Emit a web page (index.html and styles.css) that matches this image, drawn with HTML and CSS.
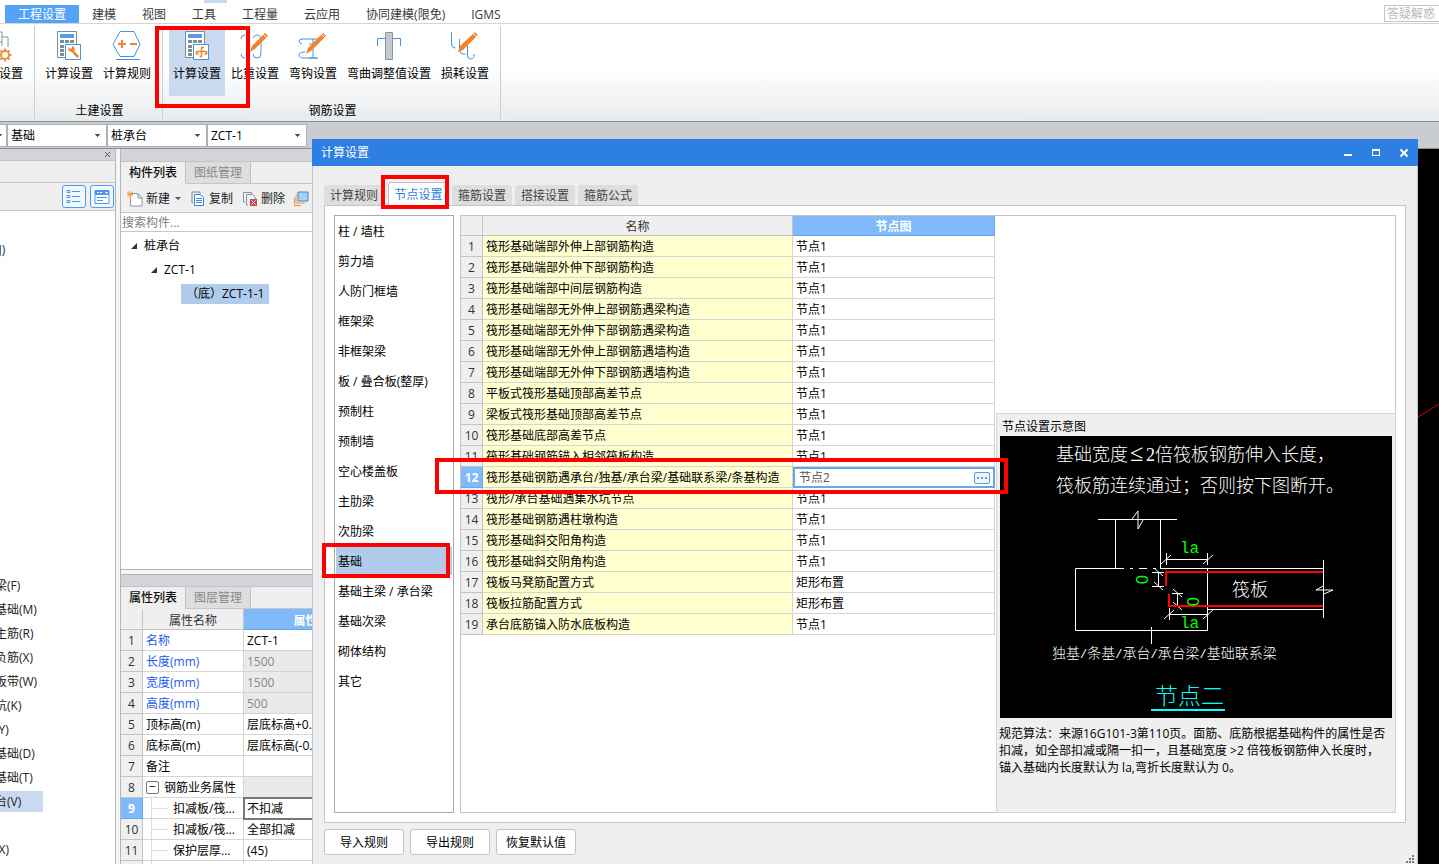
FILE: index.html
```html
<!DOCTYPE html>
<html lang="zh-CN">
<head>
<meta charset="utf-8">
<title>计算设置</title>
<link rel="stylesheet" href="styles.css">
</head>
<body>
<div class="app">
  <nav class="menu">
    <button class="menu-item active">工程设置</button>
    <button class="menu-item">建模</button>
    <button class="menu-item">视图</button>
    <button class="menu-item">工具</button>
    <button class="menu-item">工程量</button>
    <button class="menu-item">云应用</button>
    <button class="menu-item">协同建模(限免)</button>
    <button class="menu-item">IGMS</button>
    <input class="help-search" type="text" placeholder="答疑解惑，" aria-label="答疑解惑">
    <span class="quick-mark"></span>
  </nav>

  <div class="ribbon">
    <section class="group cut">
      <div class="tools">
        <button class="tool">
          <svg width="32" height="32" viewBox="0 0 32 32" fill="none"><path d="M4 2h15v5M19 7h6v10M4 2v27h15M4 12h15M4 20h13M13 2v27M19 6v10" stroke="#8496a4"/><circle cx="22" cy="25" r="4" stroke="#f0913a" stroke-width="2"/><path d="M22 18.500v2M22 29.500v2M15.500 25h2M26.500 25h2M17.500 20.500l1.500 1.500M25 28l1.500 1.500M26.500 20.500l-1.500 1.500M19 28l-1.500 1.500" stroke="#f0913a" stroke-width="2"/></svg>
          <span>楼层设置</span>
        </button>
      </div>
      <div class="group-name">&nbsp;</div>
    </section>
    <section class="group">
      <div class="tools">
        <button class="tool">
          <svg width="32" height="32" viewBox="0 0 32 32" fill="none"><path d="M15 27.500H4.500v-26h19V14" stroke="#7b8d9a"/><path d="M7 4h14v4H7z" fill="#5b9be6"/><path d="M7 10h4v3H7zM12 10h4v3h-4zM17 10h4v3h-4zM7 15h4v3H7zM12 15h2v3h-2zM7 19h4v3H7zM7 23h4v3H7z" fill="#7b8d9a"/><path d="M12.500 14.500h15v15h-15z" fill="#fff" stroke="#4592e0"/><path d="M15 17l2 2 2-1v-2l2 1 1 3-1 1 5 5-1 2-2-1-4-5-3-1-1-2z" fill="#f5822a"/></svg>
          <span>计算设置</span>
        </button>
        <button class="tool">
          <svg width="32" height="32" viewBox="0 0 32 32" fill="none"><path d="M9 1.500h14l6 13-6 12H9l-7-12zM5 29.500h24" stroke="#4592e0"/><path d="M7 14h8M11 10v8M19 14h7" stroke="#f5822a" stroke-width="2"/></svg>
          <span>计算规则</span>
        </button>
      </div>
      <div class="group-name">土建设置</div>
    </section>
    <section class="group">
      <div class="tools">
        <button class="tool selected">
          <svg width="32" height="32" viewBox="0 0 32 32" fill="none"><path d="M4.500 27.500v-26h19v26z" fill="#fff" stroke="#7b8d9a"/><path d="M7 4h14v4H7z" fill="#5b9be6"/><path d="M7 10h4v3H7zM12 10h4v3h-4zM17 10h4v3h-4zM7 15h4v3H7zM12 15h2v3h-2zM7 19h4v3H7zM7 23h4v3H7z" fill="#7b8d9a"/><path d="M12.500 14.500h15v15h-15z" fill="#fff" stroke="#4592e0"/><path d="M23 17.500h-2.500v9h-2M15 21.500h10M15.500 21v3h2M25.500 21v3h-2" stroke="#f5822a" stroke-width="1.500"/></svg>
          <span>计算设置</span>
          <i class="mark mark-tool"></i>
        </button>
        <button class="tool">
          <svg width="32" height="32" viewBox="0 0 32 32" fill="none"><path d="M2 9q0-4 4-4M14 8q1-3 4-3 4 0 4 5v14q0 4-4 4-4 0-4-4M2 24q0 4 4 4M8 6q2 1 2 5v12q0 3-2 5" stroke="#4592e0"/><path d="M11 22l2-6L26 3l3 3-13 13z" fill="#f5822a"/><path d="M24 4l4 4" stroke="#fff"/></svg>
          <span>比重设置</span>
        </button>
        <button class="tool">
          <svg width="32" height="32" viewBox="0 0 32 32" fill="none"><path d="M5 14q-3-1-3-3t4-2h18M8 22q-6 0-6 3t5 3h14M16 9v19M12 14h7M12 28h8" stroke="#4592e0"/><path d="M9 24l2-6L26 3l3 3-15 15z" fill="#f5822a"/><path d="M24 4l4 4" stroke="#fff"/></svg>
          <span>弯钩设置</span>
        </button>
        <button class="tool">
          <svg width="32" height="32" viewBox="0 0 32 32" fill="none"><path d="M4.500 16V8.500h23V16" stroke="#4592e0"/><path d="M12.500 2.500h7v27h-7z" fill="#c2c8cd" stroke="#8a969f"/></svg>
          <span>弯曲调整值设置</span>
        </button>
        <button class="tool">
          <svg width="32" height="32" viewBox="0 0 32 32" fill="none"><path d="M2.500 2v12q0 4 4 4M10.500 9v11q0 4 4 4h2M18.500 16v9q0 4 3 4 4 0 3.500-5" stroke="#4592e0"/><path d="M9 22l2-6L26 2l3 3-15 15z" fill="#f5822a"/><path d="M24 3l4 4" stroke="#fff"/></svg>
          <span>损耗设置</span>
        </button>
      </div>
      <div class="group-name">钢筋设置</div>
    </section>
  </div>

  <div class="selectors">
    <select aria-label="楼层"><option></option></select>
    <select aria-label="构件大类"><option>基础</option></select>
    <select aria-label="构件类型"><option>桩承台</option></select>
    <select aria-label="构件"><option>ZCT-1</option></select>
  </div>

  <main class="workspace">
    <aside class="nav-panel">
      <div class="strip"><button class="close-x" aria-label="关闭"><svg width="7" height="7" viewBox="0 0 7 7"><path d="M1 1l5 5M6 1L1 6" stroke="#555"/></svg></button></div>
      <div class="nav-head"></div>
      <div class="nav-tools">
        <button class="view-btn" aria-label="列表"><svg width="16" height="16" viewBox="0 0 16 16" fill="none"><path d="M1 1.500h3v2H1zM1 6.500h3v2H1zM1 11.500h3v2H1z" stroke="#4a98ec"/><path d="M6 2.500h8M6 7.500h8M6 12.500h8" stroke="#4a98ec"/></svg></button>
        <button class="view-btn" aria-label="面板"><svg width="16" height="16" viewBox="0 0 16 16"><path d="M1 1.500h14v13H1z" fill="#fff" stroke="#4a98ec"/><path d="M1 1h14v5H1z" fill="#4a98ec"/><path d="M3 3h2v1H3zM6 3h2v1H6zM11 3h3l-1 2z" fill="#fff"/><path d="M3 8.500h10M3 11.500h6" stroke="#4a98ec"/></svg></button>
      </div>
      <ul class="nav-list">
        <li></li><li>轴网(J)</li><li></li><li></li><li></li><li></li><li></li><li></li>
        <li></li><li></li><li></li><li></li><li></li><li></li><li></li>
        <li>基础梁(F)</li><li>筏板基础(M)</li><li>筏板主筋(R)</li><li>筏板负筋(X)</li><li>基础板带(W)</li>
        <li>集水坑(K)</li><li>柱墩(Y)</li><li>独立基础(D)</li><li>条形基础(T)</li>
        <li><span class="current">桩承台(V)</span></li><li></li><li>垫层(X)</li>
      </ul>
    </aside>

    <div class="side">
      <section class="components">
        <div class="strip"></div>
        <div class="tabs"><button class="tab on">构件列表</button><button class="tab">图纸管理</button></div>
        <div class="toolbar">
          <button><svg width="16" height="16" viewBox="0 0 16 16" fill="none"><path d="M4 2.500h7l4 4V15H3.500V7M11 3v4h4" stroke="#8496a4" fill="#fff"/><path d="M3 0v7M0 3.500h6M.5 1l5 5M5.500 1l-5 5" stroke="#f0913a"/></svg>新建<i class="caret"></i></button>
          <button><svg width="16" height="16" viewBox="0 0 16 16" fill="none"><path d="M3 12H2V1h8v2" stroke="#6d8699"/><path d="M4.500 3.500h6l3 3v8h-9z" fill="#fff" stroke="#3c86d8"/><path d="M6 7.500h6M6 9.500h6M6 11.500h6" stroke="#3c86d8"/></svg>复制</button>
          <button><svg width="16" height="16" viewBox="0 0 16 16" fill="none"><path d="M3 11H1.500V1.500h8V3M6 14H4.500V3.500h6l3 3V8" stroke="#8496a4"/><path d="M8 8h7v7H8z" fill="#d9424b"/><path d="M9.500 9.500l4 4M13.500 9.500l-4 4" stroke="#fff"/></svg>删除</button>
          <button aria-label="层间复制"><svg width="16" height="16" viewBox="0 0 16 16" fill="none"><path d="M5 1h10v9H5z" fill="#abd0fa" stroke="#3c86d8"/><path d="M4 4H3v8h8v-1M1.500 7v7.500H8" stroke="#f0913a"/></svg></button>
        </div>
        <input class="search" type="text" placeholder="搜索构件..." aria-label="搜索构件">
        <ul class="tree">
          <li><i class="fold"></i>桩承台</li>
          <li class="lv2"><i class="fold"></i>ZCT-1</li>
          <li class="lv3"><span>（底）ZCT-1-1</span></li>
        </ul>
      </section>
      <section class="props">
        <div class="strip"></div>
        <div class="tabs"><button class="tab on">属性列表</button><button class="tab">图层管理</button></div>
        <table class="grid">
          <colgroup><col class="c-no"><col class="c-prop"><col></colgroup>
          <thead><tr><th></th><th>属性名称</th><th class="hot">属性值</th></tr></thead>
          <tbody>
            <tr><th>1</th><td class="blue">名称</td><td>ZCT-1</td></tr>
            <tr><th>2</th><td class="blue">长度(mm)</td><td class="off">1500</td></tr>
            <tr><th>3</th><td class="blue">宽度(mm)</td><td class="off">1500</td></tr>
            <tr><th>4</th><td class="blue">高度(mm)</td><td class="off">500</td></tr>
            <tr><th>5</th><td>顶标高(m)</td><td>层底标高+0.5</td></tr>
            <tr><th>6</th><td>底标高(m)</td><td>层底标高(-0.5)</td></tr>
            <tr><th>7</th><td>备注</td><td></td></tr>
            <tr><th>8</th><td><button class="minus" aria-label="折叠">−</button>钢筋业务属性</td><td class="off"></td></tr>
            <tr><th class="hot">9</th><td class="child">扣减板/筏...</td><td class="editing">不扣减</td></tr>
            <tr><th>10</th><td class="child">扣减板/筏...</td><td>全部扣减</td></tr>
            <tr><th>11</th><td class="child">保护层厚...</td><td>(45)</td></tr>
            <tr><th></th><td class="child"></td><td></td></tr>
          </tbody>
        </table>
      </section>
    </div>

    <div class="canvas"><svg width="24" height="16" viewBox="0 0 24 16"><path d="M0 15L24 0" stroke="#e00000"/></svg></div>
  </main>

  <div class="dialog" role="dialog" aria-label="计算设置">
    <header class="title">
      <span>计算设置</span>
      <div class="win-btns">
        <button aria-label="最小化"><svg width="10" height="10" viewBox="0 0 10 10"><path d="M1 6h8v2H1z" fill="#fff"/></svg></button>
        <button aria-label="最大化"><svg width="10" height="10" viewBox="0 0 10 10"><path d="M1 1h8v7H1zM2 3v4h6V3z" fill="#fff" fill-rule="evenodd"/></svg></button>
        <button aria-label="关闭"><svg width="10" height="10" viewBox="0 0 10 10"><path d="M1.500 1.500l7 7M8.500 1.500l-7 7" stroke="#fff" stroke-width="2"/></svg></button>
      </div>
    </header>
    <div class="dlg-tabs">
      <button>计算规则</button>
      <button class="on">节点设置<i class="mark mark-tab"></i></button>
      <button>箍筋设置</button>
      <button>搭接设置</button>
      <button>箍筋公式</button>
    </div>
    <div class="dlg-body">
      <ul class="cats">
        <li>柱 / 墙柱</li><li>剪力墙</li><li>人防门框墙</li><li>框架梁</li><li>非框架梁</li>
        <li>板 / 叠合板(整厚)</li><li>预制柱</li><li>预制墙</li><li>空心楼盖板</li><li>主肋梁</li>
        <li>次肋梁</li><li class="on">基础<i class="mark mark-cat"></i></li><li>基础主梁 / 承台梁</li>
        <li>基础次梁</li><li>砌体结构</li><li>其它</li>
      </ul>
      <div class="detail">
        <div class="nodes">
          <table class="grid node-grid">
            <colgroup><col class="c-no"><col><col class="c-node"></colgroup>
            <thead><tr><th></th><th>名称</th><th class="hot">节点图</th></tr></thead>
            <tbody>
              <tr><th>1</th><td>筏形基础端部外伸上部钢筋构造</td><td>节点1</td></tr>
              <tr><th>2</th><td>筏形基础端部外伸下部钢筋构造</td><td>节点1</td></tr>
              <tr><th>3</th><td>筏形基础端部中间层钢筋构造</td><td>节点1</td></tr>
              <tr><th>4</th><td>筏形基础端部无外伸上部钢筋遇梁构造</td><td>节点1</td></tr>
              <tr><th>5</th><td>筏形基础端部无外伸下部钢筋遇梁构造</td><td>节点1</td></tr>
              <tr><th>6</th><td>筏形基础端部无外伸上部钢筋遇墙构造</td><td>节点1</td></tr>
              <tr><th>7</th><td>筏形基础端部无外伸下部钢筋遇墙构造</td><td>节点1</td></tr>
              <tr><th>8</th><td>平板式筏形基础顶部高差节点</td><td>节点1</td></tr>
              <tr><th>9</th><td>梁板式筏形基础顶部高差节点</td><td>节点1</td></tr>
              <tr><th>10</th><td>筏形基础底部高差节点</td><td>节点1</td></tr>
              <tr><th>11</th><td>筏形基础钢筋锚入相邻筏板构造</td><td>节点1</td></tr>
              <tr class="picked"><th class="hot">12<i class="mark mark-row"></i></th><td>筏形基础钢筋遇承台/独基/承台梁/基础联系梁/条基构造</td><td class="edit-cell"><div class="edit"><input type="text" value="节点2" aria-label="节点图"><button aria-label="选择"><svg width="10" height="2" viewBox="0 0 10 2"><path d="M0 0h2v2H0zM4 0h2v2H4zM8 0h2v2H8z" fill="#5b9be0"/></svg></button></div></td></tr>
              <tr><th>13</th><td>筏形/承台基础遇集水坑节点</td><td>节点1</td></tr>
              <tr><th>14</th><td>筏形基础钢筋遇柱墩构造</td><td>节点1</td></tr>
              <tr><th>15</th><td>筏形基础斜交阳角构造</td><td>节点1</td></tr>
              <tr><th>16</th><td>筏形基础斜交阴角构造</td><td>节点1</td></tr>
              <tr><th>17</th><td>筏板马凳筋配置方式</td><td>矩形布置</td></tr>
              <tr><th>18</th><td>筏板拉筋配置方式</td><td>矩形布置</td></tr>
              <tr><th>19</th><td>承台底筋锚入防水底板构造</td><td>节点1</td></tr>
            </tbody>
          </table>
        </div>
        <section class="preview">
          <h2>节点设置示意图</h2>
          <svg class="diagram" viewBox="0 0 392 282" fill="none">
            <g stroke="#fff">
              <path d="M98 83.500h79M132 83l6-8v18l5-9M115.500 83v49M160.500 83v49"/>
              <path d="M124 132.500H75.500v62h132v-62M130 132.500h3M139 132.500h8M153 132.500h3M160 132.500h163M207 173.500h116M323.500 124v58"/>
              <path d="M323 150l-7 4h17l-9 4"/>
              <path d="M166 123.500h42M166.500 117v12M207.500 117v12M161 128l10-9M203 128l10-9"/>
              <path d="M169 178.500h39M169.500 172v12M164 183l10-9M203 183l10-9"/>
              <path d="M158.500 136v15M152 136.500h12M152 150.500h12M154 132l9 8M154 146l9 8"/>
              <path d="M177.500 157v14M172 157.500h11M172 170.500h11M173 153l9 8M173 166l9 8M151.500 191v17"/>
            </g>
            <path d="M166 150v-14h157M169 158v12h154" stroke="#f00" stroke-width="2"/>
            <path d="M151 274h74" stroke="#0ff" stroke-width="2"/>
            <g class="cad">
              <text x="56" y="25">基础宽度</text><text class="sign" x="130" y="25">≤</text><text x="146" y="25">2倍筏板钢筋伸入长度，</text>
              <text x="56" y="56">筏板筋连续通过；否则按下图断开。</text>
              <text x="232" y="160">筏板</text>
            </g>
            <text class="cad-note" x="52" y="222">独基<tspan>/</tspan>条基<tspan>/</tspan>承台<tspan>/</tspan>承台梁<tspan>/</tspan>基础联系梁</text>
            <text class="cad-title" x="155" y="268">节点二</text>
            <g class="cad-dim">
              <text x="180" y="117">la</text><text x="180" y="192">la</text>
              <text class="zero" transform="translate(148 148) rotate(-90)">0</text>
              <text class="zero" transform="translate(199 170) rotate(-90)">0</text>
            </g>
          </svg>
          <p>规范算法：来源16G101-3第110页。面筋、底筋根据基础构件的属性是否扣减，如全部扣减或隔一扣一，且基础宽度 &gt;2 倍筏板钢筋伸入长度时，锚入基础内长度默认为 la,弯折长度默认为 0。</p>
        </section>
      </div>
    </div>
    <footer class="dlg-foot">
      <button>导入规则</button><button>导出规则</button><button>恢复默认值</button>
      <svg class="grip" width="10" height="10" viewBox="0 0 10 10"><path d="M7 1h2v2H7zM4 4h2v2H4zM7 4h2v2H7zM1 7h2v2H1zM4 7h2v2H4zM7 7h2v2H7z" fill="#747c88"/></svg>
    </footer>
  </div>
</div>
</body>
</html>
```

FILE: styles.css
```css
* { box-sizing: border-box; }
body {
  margin: 0;
  color: #000;
  background: #fff;
  font: 12px/18px "Open Sans", "Noto Sans CJK SC", sans-serif;
}
button, input, select { font: inherit; color: inherit; margin: 0; padding: 0; }
button { background: none; border: 0; white-space: nowrap; }
ul { list-style: none; margin: 0; padding: 0; }
svg { display: block; flex: none; }
.app { position: relative; display: flex; flex-direction: column; height: 100vh; overflow: hidden; }

/* Red call-outs drawn over the interface */
.mark { position: absolute; z-index: 5; border: 4px solid #f00; pointer-events: none; }
.mark-tool { inset: -2px -25px -12px -14px; }
.mark-tab { inset: -8px -1px -3px -8px; }
.mark-cat { inset: -4px 2px -3px -14px; }
.mark-row { inset: -9px -13px -6px -26px; }

/* Menu */
.menu { position: relative; display: flex; height: 24px; padding: 5px 0 0 5px; border-bottom: 1px solid #d5d5d5; }
.menu-item { padding: 1px 13px 0; line-height: 17px; color: #3a3a3a; }
.menu-item.active { background: #55a3f6; color: #fff; }
.help-search { width: 55px; height: 17px; margin-left: auto; padding: 0 2px; border: 1px solid #c4c4c4; border-right: 0; line-height: 15px; background: #fff; }
.help-search::placeholder { color: #b8b8b8; }
.quick-mark { position: absolute; top: 0; left: 204px; width: 23px; height: 3px; background: #c8d8ef; }

/* Ribbon */
.ribbon { display: flex; height: 98px; padding-top: 2px; background: linear-gradient(#fff 45%, #e8ebed); border-bottom: 1px solid #8b9095; }
.group { display: flex; flex-direction: column; justify-content: space-between; margin-bottom: 2px; padding: 2px 7px 0 6px; border-right: 1px solid #cdcfd2; }
.group.cut { width: 35px; align-items: flex-end; }
.tools { display: flex; gap: 2px; }
.tool { position: relative; display: flex; flex-direction: column; align-items: center; height: 68px; padding: 2px 4px 0; gap: 3px; }
.tool.selected { background: #c9d9ef; }
.group-name { padding: 0 0 0 3px; text-align: center; line-height: 17px; }

/* Selector bar */
.selectors { display: flex; height: 27px; padding: 2px 0 1px; background: #c9ccd1; border-bottom: 1px solid #8b9095; }
.selectors select {
  appearance: none;
  width: 100px;
  height: 23px;
  padding: 0 3px;
  border: 1px solid #b0b0b0;
  border-radius: 0;
  background: #fff conic-gradient(from -45deg at 50% 100%, #555 90deg, transparent 0) no-repeat right 6px center / 5px 3px;
}
.selectors select:first-child { width: 7px; padding: 0; border-left: 0; background-position: left -3px center; }

/* Workspace */
.workspace { display: flex; flex: 1; min-height: 0; background: #f4f5f6; }
.strip { display: flex; justify-content: flex-end; height: 12px; background: #d3d4d9; border-bottom: 1px solid #c2c4ca; flex: none; }
.close-x { display: grid; place-items: center; width: 16px; }
.nav-panel { width: 116px; border-right: 1px solid #b5b5b5; background: #fff; overflow: hidden; }
.nav-head { height: 22px; background: #efefef; border-bottom: 1px solid #c6c6c6; }
.nav-tools { display: flex; justify-content: flex-end; gap: 4px; height: 28px; padding: 2px 1px; background: #efefef; border-bottom: 1px solid #c6c6c6; }
.view-btn { display: grid; place-items: center; width: 24px; height: 23px; border: 1px solid #4a9cf0; border-radius: 3px; background: #f3f8fe; }
.nav-list { padding-top: 3px; margin-left: -29px; }
.nav-list li { height: 24px; line-height: 24px; white-space: nowrap; color: #222; }
.current { display: inline-block; width: 72px; line-height: 21px; background: #c9d9ef; }

.side { display: flex; flex-direction: column; width: 260px; margin-left: 4px; border-left: 1px solid #b5b5b5; flex: none; }
.components { display: flex; flex-direction: column; height: 421px; background: #fff; border-bottom: 1px solid #b5b5b5; }
.components .strip { height: 13px; }
.props { flex: 1; margin-top: 4px; background: #fff; overflow: hidden; }
.tabs { display: flex; height: 22px; background: #efefef; border-bottom: 1px solid #c6c6c6; flex: none; }
.tab { width: 65px; margin-bottom: -1px; border-right: 1px solid #c2c2c2; border-bottom: 1px solid #c6c6c6; background: #dedede; color: #888; }
.tab.on { background: #efefef; border-bottom-color: #efefef; color: #111; font-weight: 500; }
.props .strip { border-top: 1px solid #b5b5b5; height: 13px; }
.toolbar { display: flex; align-items: center; gap: 9px; height: 29px; padding: 1px 0 0 6px; background: #efefef; border-bottom: 1px solid #c6c6c6; flex: none; }
.toolbar button { display: flex; align-items: center; gap: 3px; color: #222; }
.toolbar button:last-child { margin-left: -1px; }
.caret { width: 0; margin-left: 2px; border: 3px solid transparent; border-top-color: #555; border-bottom: 0; }
.search { width: 100%; height: 19px; padding: 0 1px; border: 0; border-bottom: 1px solid #c6c6c6; background: #fff; flex: none; }
.search::placeholder { color: #808080; }
.tree { padding-top: 2px; }
.tree li { display: flex; align-items: center; gap: 7px; height: 24px; padding-left: 10px; }
.tree .lv2 { padding-left: 30px; }
.tree .lv3 { padding-left: 60px; }
.lv3 span { padding: 0 5px; line-height: 20px; background: #b1cbec; }
.fold { width: 0; border-left: 6px solid transparent; border-bottom: 6px solid #333; }

/* Grids */
.grid { width: 100%; border-collapse: separate; border-spacing: 0; table-layout: fixed; background: #fff; }
.grid th, .grid td { height: 21px; padding: 2px 2px 0; border-right: 1px solid #d5d5d5; border-bottom: 1px solid #d5d5d5; line-height: 18px; white-space: nowrap; text-align: left; overflow: hidden; font-weight: 400; }
.grid td { padding-left: 3px; }
.grid th { background: #efefef; border-color: #c4c4c4; text-align: center; color: #333; overflow: visible; }
.grid thead th { line-height: 17px; }
.grid th.hot { background: #80bafa; border-color: #66a7ec; color: #fff; font-weight: 700; }
.c-no { width: 22px; }
.c-prop { width: 101px; }
.c-node { width: 202px; }
.grid .blue { color: #1c5cf0; }
.grid .off { background: #eaeaea; color: #888; }
.grid .child { padding-left: 30px; background: linear-gradient(#ddd, #ddd) 8px 0 / 1px 100% no-repeat, linear-gradient(#ddd, #ddd) 8px 10px / 17px 1px no-repeat; }
.grid .editing { outline: 2px solid #777; outline-offset: -1px; }
.minus { width: 13px; height: 13px; margin-right: 5px; border: 1px solid #777; border-radius: 2px; background: #fff; line-height: 10px; vertical-align: 1px; }
.node-grid thead th { height: 20px; }
.node-grid td:nth-child(2) { background: #ffffcf; }
.picked { position: relative; }
.grid .edit-cell { padding: 0; border: 0; }
.edit { display: flex; align-items: center; height: 21px; padding: 0 3px 0 4px; border: 2px solid #66a7e8; background: #fff; }
.edit input { flex: 1; min-width: 0; height: 17px; border: 0; background: none; color: #555; outline: 0; }
.edit button { display: grid; place-items: center; width: 16px; height: 12px; border: 1px solid #5b9be0; border-radius: 2px; background: #eef5fd; }

.canvas { flex: 1; display: flex; justify-content: flex-end; padding-top: 255px; background: #000; }

/* Settings window */
.dialog { position: absolute; top: 139px; left: 312px; right: 21px; bottom: 0; display: flex; flex-direction: column; padding: 0 11px; background: #efefef; border-left: 1px solid #bcc3d3; border-right: 1px solid #bcc3d3; }
.title { display: flex; justify-content: space-between; align-items: center; height: 27px; margin: 0 -12px; padding: 0 9px; background: #2d7fe1; color: #fff; flex: none; }
.win-btns { display: flex; gap: 18px; }
.dlg-tabs { display: flex; align-items: flex-end; gap: 3px; height: 39px; flex: none; }
.dlg-tabs button { position: relative; width: 60px; height: 20px; padding-top: 1px; border-radius: 3px 3px 0 0; background: #dedede; color: #444; }
.dlg-tabs .on { width: 61px; height: 24px; margin: 0 0 -1px 1px; border: 1px solid #c4c4c4; border-bottom: 0; background: #fff; color: #2d7fe1; z-index: 1; }
.dlg-body { display: flex; flex: 1; min-height: 0; gap: 6px; padding: 9px; border: 1px solid #c4c4c4; background: #fff; }
.cats { width: 120px; border: 1px solid #aaa; flex: none; }
.cats li { position: relative; height: 28px; margin: 1px 1px 2px; padding-left: 2px; line-height: 30px; white-space: nowrap; }
.cats li + li { margin-top: 2px; }
.cats .on { background: #b1cbec; }
.detail { display: flex; flex: 1; min-width: 0; border: 1px solid #c4c4c4; }
.nodes { flex: 1; min-width: 0; }
.preview { align-self: flex-end; width: 400px; height: 400px; margin: 0 -1px -1px 1px; padding: 4px 3px; background: #efefef; border: 1px solid #d5d5d5; flex: none; }
.preview h2 { margin: 0 2px; font-size: 12px; font-weight: 400; line-height: 18px; }
.preview p { margin: 7px 4px 0 -1px; line-height: 17px; }
.diagram { width: 100%; background: #000; }
.cad, .cad-note, .cad-title { font-family: "Liberation Serif", "Noto Sans CJK SC", serif; font-weight: 300; fill: #fff; }
.cad { font-size: 18px; }
.cad .sign { font-size: 24px; }
.cad-note { font-size: 14px; }
.cad-note tspan { font-family: "Liberation Mono", monospace; font-size: 12px; }
.cad-title { font-size: 23px; fill: #0ff; }
.cad-dim { font-family: "Liberation Mono", monospace; font-size: 16px; fill: #0f0; }
.cad-dim .zero { font-family: "Liberation Sans", sans-serif; }
.dlg-foot { display: flex; gap: 6px; height: 41px; padding-top: 6px; flex: none; }
.dlg-foot button { width: 80px; height: 26px; padding-top: 1px; border: 1px solid #c4c4c4; border-radius: 3px; background: #fff; }
.grip { align-self: flex-end; margin: 0 -9px 0 auto; }
```
